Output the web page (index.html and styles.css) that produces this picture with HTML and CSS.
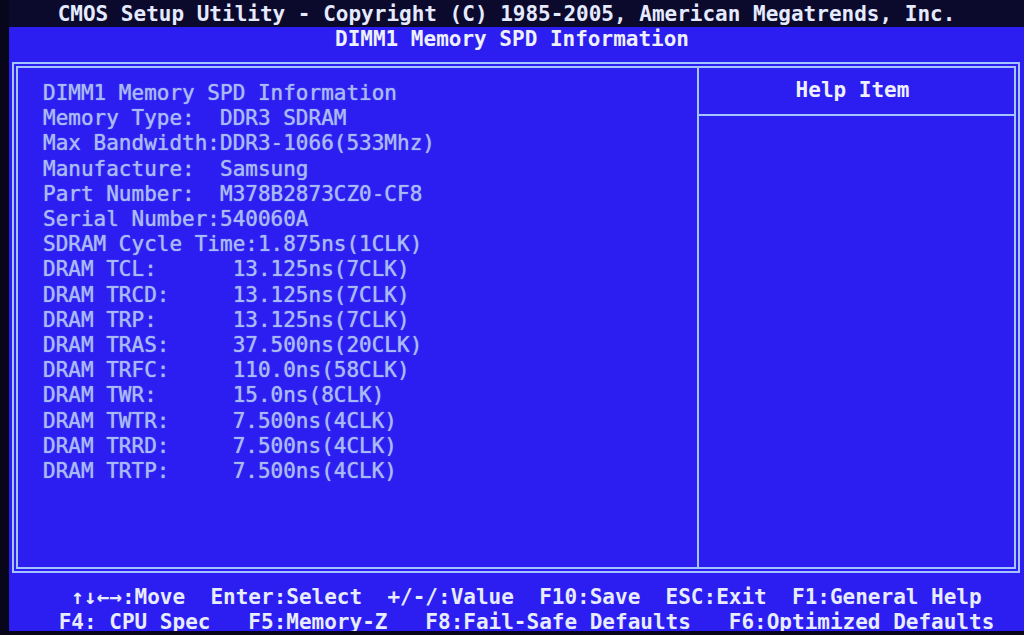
FILE: index.html
```html
<!DOCTYPE html>
<html lang="en">
<head>
    <meta charset="UTF-8">
    <title>CMOS Setup Utility - DIMM1 Memory SPD Information</title>
    <link rel="stylesheet" href="styles.css">
</head>
<body>
    <div class="screen">
        <div class="topbar">CMOS Setup Utility - Copyright (C) 1985-2005, American Megatrends, Inc.</div>
        <div class="subtitle">DIMM1 Memory SPD Information</div>
        <div class="frame">
            <div class="main">
<pre class="info">DIMM1 Memory SPD Information
Memory Type:  DDR3 SDRAM
Max Bandwidth:DDR3-1066(533Mhz)
Manufacture:  Samsung
Part Number:  M378B2873CZ0-CF8
Serial Number:540060A
SDRAM Cycle Time:1.875ns(1CLK)
DRAM TCL:      13.125ns(7CLK)
DRAM TRCD:     13.125ns(7CLK)
DRAM TRP:      13.125ns(7CLK)
DRAM TRAS:     37.500ns(20CLK)
DRAM TRFC:     110.0ns(58CLK)
DRAM TWR:      15.0ns(8CLK)
DRAM TWTR:     7.500ns(4CLK)
DRAM TRRD:     7.500ns(4CLK)
DRAM TRTP:     7.500ns(4CLK)</pre>
            </div>
            <div class="help">
                <div class="help-title">Help Item</div>
            </div>
        </div>
        <div class="footer">
<pre class="keys">↑↓←→:Move  Enter:Select  +/-/:Value  F10:Save  ESC:Exit  F1:General Help
F4: CPU Spec   F5:Memory-Z   F8:Fail-Safe Defaults   F6:Optimized Defaults</pre>
        </div>
    </div>
</body>
</html>
```

FILE: styles.css
```css
body {
    margin: 0;
    background: #07061a;
    font-family: "DejaVu Sans Mono", monospace;
    font-size: 21px;
    overflow: hidden;
}
pre {
    margin: 0;
    font-family: inherit;
    font-size: inherit;
}
.screen {
    margin-left: 9px;
    height: 631px;
    background: #2c1ef1;
    display: flex;
    flex-direction: column;
}
.topbar {
    flex-shrink: 0;
    height: 27px;
    line-height: 29px;
    background: #0b0a2c;
    color: #e6eaff;
    font-weight: bold;
    text-align: center;
    padding-right: 20px;
    white-space: pre;
}
.subtitle {
    flex-shrink: 0;
    height: 25px;
    line-height: 25px;
    color: #eef0ff;
    font-weight: bold;
    text-align: center;
    padding-right: 9px;
}
.frame {
    flex-shrink: 0;
    margin: 10px 4px 0 3px;
    height: 499px;
    border: 6px double #a4c4ff;
    display: flex;
}
.main {
    width: 654px;
    padding: 13px 0 0 25px;
    border-right: 2px solid #a4c4ff;
}
.info {
    color: #a8baf7;
    line-height: 25.2px;
    text-shadow: 0 0 1px #a8baf7;
}
.help {
    flex: 1;
}
.help-title {
    height: 46px;
    line-height: 44px;
    border-bottom: 2px solid #a4c4ff;
    color: #eef0ff;
    font-weight: bold;
    text-align: center;
    padding-right: 8px;
}
.footer {
    flex-shrink: 0;
    height: 58px;
    padding-top: 12px;
    padding-left: 20px;
    text-align: center;
}
.keys {
    display: inline-block;
    text-align: center;
    color: #e8ecff;
    font-weight: bold;
    line-height: 25px;
}
```
